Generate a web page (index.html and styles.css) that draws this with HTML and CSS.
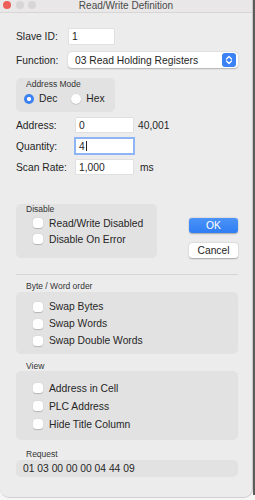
FILE: index.html
```html
<!DOCTYPE html>
<html>
	<head>
		<meta charset="utf-8">
		<title>Read/Write Definition</title>
		<link rel="stylesheet" href="styles.css">
	</head>
	<body>
		<div class="screen">
			<div class="window">
				<div class="titlebar">
					<div class="lights"><i class="red"></i><i></i><i></i></div>
					<div class="title">Read/Write Definition</div>
				</div>
				<div class="main">
					<div class="row r-slave">
						<span class="lbl w53">Slave ID:</span>
						<span class="field w45">1</span>
					</div>
					<div class="row r-func">
						<span class="lbl w52">Function:</span>
						<div class="select">
							<span>03 Read Holding Registers</span>
							<span class="stepper">
								<svg width="8" height="10" viewBox="0 0 8 10"><path d="M1.5 4 L4 1.5 L6.5 4 M1.5 6 L4 8.5 L6.5 6" fill="none" stroke="#fff" stroke-width="1.3" stroke-linecap="round" stroke-linejoin="round"/></svg>
							</span>
						</div>
					</div>
					<div class="modebox">
						<div class="grp-lbl">Address Mode</div>
						<div class="radios">
							<span class="radio on"></span><span class="rtxt first">Dec</span>
							<span class="radio"></span><span class="rtxt">Hex</span>
						</div>
					</div>
					<div class="row r-addr">
						<span class="lbl w60">Address:</span>
						<span class="field w57">0</span>
						<span class="after">40,001</span>
					</div>
					<div class="row r-qty">
						<span class="lbl w60">Quantity:</span>
						<span class="field w57 focus">4<b class="caret"></b></span>
					</div>
					<div class="row r-scan">
						<span class="lbl w60">Scan Rate:</span>
						<span class="field w57">1,000</span>
						<span class="after ms">ms</span>
					</div>
					<div class="disable-row">
						<div class="box disable">
							<div class="grp-lbl">Disable</div>
							<ul class="checks">
								<li><span class="check"></span>Read/Write Disabled</li>
								<li><span class="check"></span>Disable On Error</li>
							</ul>
						</div>
						<div class="buttons">
							<div class="btn ok">OK</div>
							<div class="btn">Cancel</div>
						</div>
					</div>
					<div class="sep"></div>
					<div class="sect-lbl">Byte / Word order</div>
					<div class="box order">
						<ul class="checks">
							<li><span class="check"></span>Swap Bytes</li>
							<li><span class="check"></span>Swap Words</li>
							<li><span class="check"></span>Swap Double Words</li>
						</ul>
					</div>
					<div class="sect-lbl">View</div>
					<div class="box view">
						<ul class="checks">
							<li><span class="check"></span>Address in Cell</li>
							<li><span class="check"></span>PLC Address</li>
							<li><span class="check"></span>Hide Title Column</li>
						</ul>
					</div>
					<div class="sect-lbl">Request</div>
					<div class="box request">01 03 00 00 00 04 44 09</div>
				</div>
			</div>
			<div class="strip"></div>
		</div>
	</body>
</html>
```
FILE: styles.css
```css
html,body,ul,li{margin: 0; padding: 0;}
ul,li{list-style: none;}
body{
	background: #f6f6f6;
	font-family: "Liberation Sans", Arial, sans-serif;
	font-size: 10.3px;
	color: #262626;
}
.screen{
	display: flex;
	width: 255px;
	height: 500px;
}
.window{
	width: 252px;
	height: 497px;
	background: #ececec;
	border-right: 1px solid #c8c8c8;
	border-bottom: 1px solid #d0d0d0;
	border-radius: 0 0 9px 9px;
	overflow: hidden;
	flex-shrink: 0;
}
.strip{
	flex: 1;
	height: 495px;
	background: #5c5c5c;
}
.titlebar{
	position: relative;
	height: 12px;
	background: #e9e7e7;
	border-bottom: 1px solid #d6d6d6;
	display: flex;
	justify-content: center;
	align-items: center;
}
.lights{
	position: absolute;
	left: 3px;
	top: 1px;
	display: flex;
	gap: 4.5px;
}
.lights i{
	width: 8px;
	height: 8px;
	border-radius: 50%;
	background: #d7d5d5;
}
.lights i.red{
	background: #ec5e57;
}
.title{
	font-size: 10px;
	color: #4a4a4a;
	margin-top: -2px;
}
.main{
	padding: 16px 14px 0 16px;
}
.row{
	display: flex;
	align-items: center;
}
.lbl{
	flex-shrink: 0;
}
.w53{width: 53px;}
.w52{width: 52px;}
.w60{width: 60px;}
.field{
	height: 15px;
	line-height: 15px;
	background: #fff;
	padding-left: 3px;
	box-sizing: border-box;
	box-shadow: 0 0 0 0.5px #d4d4d4;
	display: flex;
	align-items: center;
}
.w45{width: 45px;}
.w57{width: 57px; height: 14px;}
.after{
	margin-left: 5px;
}
.after.ms{
	margin-left: 7px;
}
.focus{
	box-shadow: 0 0 0 2px #8db4f4;
}
.caret{
	width: 1px;
	height: 10px;
	background: #222;
	margin-left: 1px;
}
.r-func{
	margin-top: 8px;
}
.select{
	flex: 1;
	height: 16px;
	background: #fff;
	border-radius: 4px;
	box-shadow: 0 0.5px 1.5px rgba(0,0,0,.25);
	display: flex;
	justify-content: space-between;
	align-items: center;
	padding: 0 2px 0 7px;
}
.stepper{
	width: 14px;
	height: 14px;
	border-radius: 3px;
	background: #3b82f5;
	display: flex;
	justify-content: center;
	align-items: center;
}
.modebox{
	margin-top: 10px;
	width: 99px;
	height: 34px;
	background: #e2e2e2;
	border-radius: 5px;
	box-sizing: border-box;
	padding: 1px 0 0 10px;
}
.grp-lbl{
	font-size: 8.5px;
	color: #333;
	line-height: 10px;
}
.radios{
	display: flex;
	align-items: center;
	margin: 4px 0 0 -2px;
}
.radio{
	flex-shrink: 0;
	width: 10px;
	height: 10px;
	border-radius: 50%;
	background: #fff;
	box-shadow: 0 0.5px 1px rgba(0,0,0,.25);
}
.radio.on{
	background: radial-gradient(circle, #fff 0 1.8px, #3b82f5 2.4px);
	box-shadow: none;
}
.rtxt{
	margin-left: 5px;
}
.rtxt.first{
	margin-right: 14px;
}
.r-addr{
	margin-top: 6px;
}
.r-qty{
	margin-top: 7px;
}
.r-scan{
	margin-top: 7px;
}
.disable-row{
	margin-top: 30px;
	display: flex;
	justify-content: space-between;
}
.box{
	background: #e2e2e2;
	border-radius: 5px;
	box-sizing: border-box;
}
.disable{
	width: 141px;
	height: 54px;
	padding: 0 0 0 10px;
}
.disable .grp-lbl{
	line-height: 11px;
}
.checks li{
	display: flex;
	align-items: center;
	height: 17px;
}
.check{
	flex-shrink: 0;
	width: 10px;
	height: 10px;
	border-radius: 3px;
	background: #fff;
	box-shadow: 0 0.5px 1px rgba(0,0,0,.2);
	margin-right: 6px;
}
.disable .checks{
	margin: 0 0 0 7px;
}
.disable .checks li{
	height: 16px;
}
.buttons{
	padding-top: 14px;
	display: flex;
	flex-direction: column;
	gap: 10px;
}
.btn{
	width: 49px;
	height: 15px;
	line-height: 15px;
	text-align: center;
	background: #fff;
	border-radius: 3px;
	box-shadow: 0 0.5px 1.5px rgba(0,0,0,.3);
}
.btn.ok{
	background: linear-gradient(#4b93f8, #2f7ef4);
	color: #fff;
}
.sep{
	margin-top: 16px;
	height: 1px;
	background: #d6d6d6;
}
.sect-lbl{
	font-size: 8.5px;
	color: #333;
	padding-left: 10px;
	line-height: 10px;
	margin-top: 6px;
}
.order{
	margin-top: 1px;
	height: 62px;
	padding: 6px 0 0 17px;
}
.order + .sect-lbl{
	margin-top: 7px;
}
.view{
	height: 69px;
	padding: 8px 0 0 17px;
}
.view .checks li{
	height: 18px;
}
.view + .sect-lbl{
	margin-top: 9px;
}
.request{
	margin-top: 1px;
	height: 17px;
	line-height: 17px;
	padding-left: 7px;
}
```
